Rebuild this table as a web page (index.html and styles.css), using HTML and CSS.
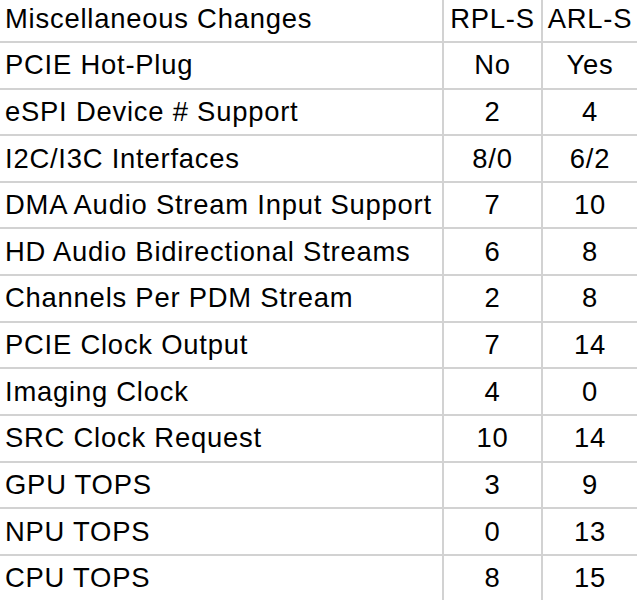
FILE: index.html
```html
<!DOCTYPE html>
<html lang="en">
<head>
<meta charset="utf-8">
<title>Miscellaneous Changes</title>
<link rel="stylesheet" href="styles.css">
</head>
<body>
<div class="sheet">
  <div class="cell label">Miscellaneous Changes</div><div class="cell num">RPL-S</div><div class="cell num">ARL-S</div>
  <div class="cell label">PCIE Hot-Plug</div><div class="cell num">No</div><div class="cell num">Yes</div>
  <div class="cell label">eSPI Device # Support</div><div class="cell num">2</div><div class="cell num">4</div>
  <div class="cell label">I2C/I3C Interfaces</div><div class="cell num">8/0</div><div class="cell num">6/2</div>
  <div class="cell label">DMA Audio Stream Input Support</div><div class="cell num">7</div><div class="cell num">10</div>
  <div class="cell label">HD Audio Bidirectional Streams</div><div class="cell num">6</div><div class="cell num">8</div>
  <div class="cell label">Channels Per PDM Stream</div><div class="cell num">2</div><div class="cell num">8</div>
  <div class="cell label">PCIE Clock Output</div><div class="cell num">7</div><div class="cell num">14</div>
  <div class="cell label">Imaging Clock</div><div class="cell num">4</div><div class="cell num">0</div>
  <div class="cell label">SRC Clock Request</div><div class="cell num">10</div><div class="cell num">14</div>
  <div class="cell label">GPU TOPS</div><div class="cell num">3</div><div class="cell num">9</div>
  <div class="cell label">NPU TOPS</div><div class="cell num">0</div><div class="cell num">13</div>
  <div class="cell label">CPU TOPS</div><div class="cell num">8</div><div class="cell num">15</div>
</div>
</body>
</html>
```
FILE: styles.css
```css
html, body {
  margin: 0;
  padding: 0;
  background: #ffffff;
  overflow: hidden;
}

.sheet {
  display: grid;
  grid-template-columns: 442px 99px 96px;
  grid-auto-rows: 46.64px;
  width: 637px;
  margin-top: -3.7px;
  font-family: "Liberation Sans", Arial, sans-serif;
  font-size: 27.4px;
  letter-spacing: 0.78px;
  color: #000000;
}

.cell {
  box-sizing: border-box;
  display: flex;
  align-items: center;
  border-bottom: 2px solid #d2d2d2;
  white-space: nowrap;
  line-height: 30px;
}

.label {
  padding-left: 5px;
}

.num {
  justify-content: center;
  border-left: 2px solid #d2d2d2;
}
```
